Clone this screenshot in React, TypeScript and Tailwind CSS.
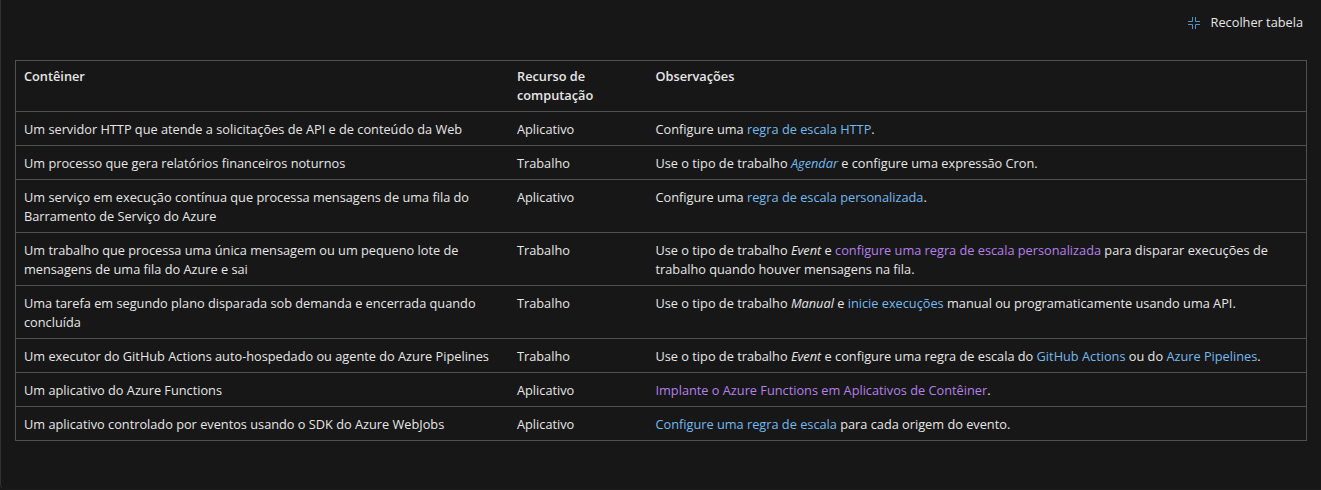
import { ReactNode } from "react";

const Blue = ({ children }: { children: ReactNode }) => (
  <a className="text-[#75b9ee]">{children}</a>
);
const Purple = ({ children }: { children: ReactNode }) => (
  <a className="text-[#b580ea]">{children}</a>
);

type Row = { h: string; c: string; r: string; n: ReactNode };

const rows: Row[] = [
  { h: "h-[34px]", c: "Um servidor HTTP que atende a solicitações de API e de conteúdo da Web", r: "Aplicativo", n: <>Configure uma <Blue>regra de escala HTTP</Blue>.</> },
  { h: "h-[34px]", c: "Um processo que gera relatórios financeiros noturnos", r: "Trabalho", n: <>Use o tipo de trabalho <Blue><em>Agendar</em></Blue> e configure uma expressão Cron.</> },
  { h: "h-[53px]", c: "Um serviço em execução contínua que processa mensagens de uma fila do Barramento de Serviço do Azure", r: "Aplicativo", n: <>Configure uma <Blue>regra de escala personalizada</Blue>.</> },
  { h: "h-[53px]", c: "Um trabalho que processa uma única mensagem ou um pequeno lote de mensagens de uma fila do Azure e sai", r: "Trabalho", n: <>Use o tipo de trabalho <em>Event</em> e <Purple>configure uma regra de escala personalizada</Purple> para disparar execuções de trabalho quando houver mensagens na fila.</> },
  { h: "h-[53px]", c: "Uma tarefa em segundo plano disparada sob demanda e encerrada quando concluída", r: "Trabalho", n: <>Use o tipo de trabalho <em>Manual</em> e <Blue>inicie execuções</Blue> manual ou programaticamente usando uma API.</> },
  { h: "h-[34px]", c: "Um executor do GitHub Actions auto-hospedado ou agente do Azure Pipelines", r: "Trabalho", n: <>Use o tipo de trabalho <em>Event</em> e configure uma regra de escala do <Blue>GitHub Actions</Blue> ou do <Blue>Azure Pipelines</Blue>.</> },
  { h: "h-[34px]", c: "Um aplicativo do Azure Functions", r: "Aplicativo", n: <><Purple>Implante o Azure Functions em Aplicativos de Contêiner</Purple>.</> },
  { h: "h-[34px]", c: "Um aplicativo controlado por eventos usando o SDK do Azure WebJobs", r: "Aplicativo", n: <><Blue>Configure uma regra de escala</Blue> para cada origem do evento.</> },
];

export default function App() {
  return (
    <div className="h-[490px] w-[1321px] overflow-hidden bg-[#171717] font-['Open_Sans',sans-serif] text-[12.75px] leading-[19px] text-[#e6e6e6]">
      <div className="h-full rounded-bl-md border-b border-l border-[#303030] border-b-[#1b1b1b] px-[14px]">
        <div className="flex h-[60px] items-start justify-end pr-[4px] pt-[13px]">
          <button className="flex items-center gap-[11px]">
            <svg width="12" height="12" viewBox="0 0 12 12" fill="none" stroke="#4f93c9" strokeWidth="1">
              <path d="M4.5 0v4.5H0M7.5 0v4.5H12M4.5 12V7.5H0M7.5 12V7.5H12" />
            </svg>
            <span>Recolher tabela</span>
          </button>
        </div>
        <table className="w-[1292px] table-fixed border-collapse">
          <colgroup>
            <col className="w-[493.5px]" />
            <col className="w-[138.5px]" />
            <col />
          </colgroup>
          <thead>
            <tr className="h-[51px]">
              {["Contêiner", "Recurso de computação", "Observações"].map((t) => (
                <th key={t} className="border-y border-[#505050] px-2 pt-[6px] text-left align-top font-semibold first:border-l last:border-r">{t}</th>
              ))}
            </tr>
          </thead>
          <tbody>
            {rows.map((row) => (
              <tr key={row.c} className={row.h}>
                <td className="border-y border-l border-[#505050] px-2 pt-[8px] align-top">{row.c}</td>
                <td className="border-y border-[#505050] px-2 pt-[8px] align-top">{row.r}</td>
                <td className="border-y border-r border-[#505050] px-2 pt-[8px] align-top">{row.n}</td>
              </tr>
            ))}
          </tbody>
        </table>
      </div>
    </div>
  );
}
